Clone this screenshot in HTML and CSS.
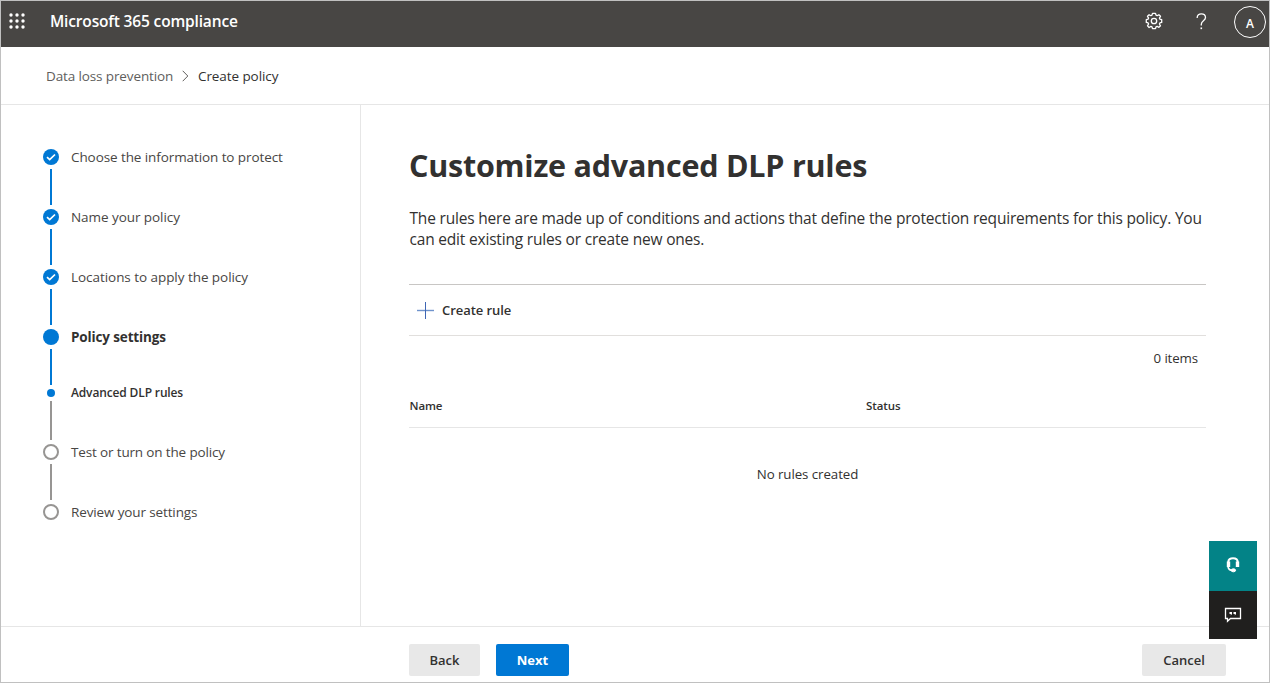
FILE: index.html
```html
<!DOCTYPE html>
<html lang="en">
<head>
<meta charset="utf-8">
<title>Create policy - Microsoft 365 compliance</title>
<link rel="stylesheet" href="styles.css">
</head>
<body>
<div class="app">
  <header class="topbar">
    <svg class="waffle" width="16" height="16" viewBox="0 0 16 16" fill="#fff">
      <circle cx="2" cy="2" r="1.700"/><circle cx="8" cy="2" r="1.700"/><circle cx="14" cy="2" r="1.700"/>
      <circle cx="2" cy="8" r="1.700"/><circle cx="8" cy="8" r="1.700"/><circle cx="14" cy="8" r="1.700"/>
      <circle cx="2" cy="14" r="1.700"/><circle cx="8" cy="14" r="1.700"/><circle cx="14" cy="14" r="1.700"/>
    </svg>
    <span class="brand">Microsoft 365 compliance</span>
    <svg class="gear" width="18" height="18" viewBox="0 0 18 18" fill="none" stroke="#fff" stroke-width="1.300" stroke-linejoin="round">
      <path d="M7.500 1.300h3l.5 1.900 1.100.5L13.900 2.700 15.500 4.300 14.400 6.100 14.900 7.200 16.700 7.600v2.800l-1.800.5-.5 1.100 1.100 1.800-1.600 1.600-1.800-1.100-1.100.5L10.500 16.700h-3L7 14.900l-1.100-.5-1.800 1.100-1.600-1.600L3.600 12l-.5-1.100L1.300 10.400V7.600l1.800-.4.500-1.100L2.500 4.300 4.100 2.700 5.900 3.700 7 3.200z"/>
      <circle cx="9" cy="9" r="2.700"/>
    </svg>
    <svg class="help" width="11" height="17" viewBox="0 0 11 17" fill="none" stroke="#fff" stroke-width="1.300">
      <path d="M1.200 5V4.500C1.200 2.300 3 .8 5.300.8s4.200 1.400 4.200 3.700c0 3.200-4.200 3.400-4.200 6.800V12.500"/>
      <path d="M4.500 15.300h1.600" stroke-width="1.700"/>
    </svg>
    <span class="avatar">A</span>
  </header>

  <nav class="crumbs">
    <span class="crumb-parent">Data loss prevention</span>
    <svg class="chevron" width="7" height="12" viewBox="0 0 7 12" fill="none" stroke="#605e5c"><path d="M.7.800 5.800 6 .7 11.200"/></svg>
    <span class="crumb-current">Create policy</span>
  </nav>

  <div class="body">
    <aside class="steps">
      <div class="step"><svg class="check" width="16" height="16" viewBox="0 0 16 16"><circle cx="8" cy="8" r="8" fill="#0078d4"/><path d="M4 8.200 6.700 10.700 12 5.500" fill="none" stroke="#fff" stroke-width="1.700"/></svg><span class="label s1">Choose the information to protect</span></div>
      <div class="line"></div>
      <div class="step"><svg class="check" width="16" height="16" viewBox="0 0 16 16"><circle cx="8" cy="8" r="8" fill="#0078d4"/><path d="M4 8.200 6.700 10.700 12 5.500" fill="none" stroke="#fff" stroke-width="1.700"/></svg><span class="label s2">Name your policy</span></div>
      <div class="line"></div>
      <div class="step"><svg class="check" width="16" height="16" viewBox="0 0 16 16"><circle cx="8" cy="8" r="8" fill="#0078d4"/><path d="M4 8.200 6.700 10.700 12 5.500" fill="none" stroke="#fff" stroke-width="1.700"/></svg><span class="label s3">Locations to apply the policy</span></div>
      <div class="line"></div>
      <div class="step"><i class="dot"></i><span class="label current">Policy settings</span></div>
      <div class="line"></div>
      <div class="step substep"><i class="dot small"></i><span class="label sub">Advanced DLP rules</span></div>
      <div class="line pending long"></div>
      <div class="step"><i class="dot ring"></i><span class="label s4">Test or turn on the policy</span></div>
      <div class="line pending"></div>
      <div class="step"><i class="dot ring"></i><span class="label s5">Review your settings</span></div>
    </aside>

    <main class="content">
      <h1>Customize advanced DLP rules</h1>
      <p class="intro">The rules here are made up of conditions and actions that define the protection requirements for this policy. You<br>can edit existing rules or create new ones.</p>
      <div class="commands">
        <svg class="plus" width="17" height="17" viewBox="0 0 17 17" fill="none"><path d="M0 8.500h17" stroke="#6f93cc" stroke-width="1.400"/><path d="M8.500 0v17" stroke="#3f66b4"/></svg>
        <span class="create">Create rule</span>
      </div>
      <div class="count"><span>0 items</span></div>
      <div class="columns"><span>Name</span><span>Status</span></div>
      <div class="empty"><span>No rules created</span></div>
    </main>
  </div>

  <footer class="footer">
    <button class="btn back">Back</button>
    <button class="btn next">Next</button>
    <button class="btn cancel">Cancel</button>
  </footer>

  <div class="floaters">
    <div class="support">
      <svg width="14" height="16" viewBox="0 0 14 16" fill="none" stroke="#fff">
        <path d="M2.300 6V5C2.300 2.500 4.300 1.200 7 1.200s4.700 1.300 4.700 3.800v1" stroke-width="2"/>
        <path d="M2.500 4.500v5.500M11.500 4.500v5.500" stroke-width="3.400"/>
        <path d="M2 9.500c.5 3 2.300 3.900 4.500 4" stroke-width="1.600"/>
        <ellipse cx="7.400" cy="13.300" rx="2.200" ry="1.500" fill="#fff"/>
      </svg>
    </div>
    <div class="feedback">
      <svg width="18" height="16" viewBox="0 0 18 16" fill="none" stroke="#fff" stroke-width="1.300">
        <path d="M1.500 1.500h15v10H6.500L3.500 14.300V11.500h-2z"/>
        <path d="M5.500 5h2.500v2L6.800 8.500V7H5.500zM9.500 5H12v2l-1.200 1.500V7H9.500z" fill="#fff" stroke="none"/>
      </svg>
    </div>
  </div>
</div>
</body>
</html>
```
FILE: styles.css
```css
* { box-sizing: border-box; }
body {
  margin: 0;
  font-family: "Open Sans", "Noto Sans", sans-serif;
  font-size: 13.500px;
  color: #323130;
  background: #fff;
}
.app {
  position: relative;
  width: 1270px;
  height: 683px;
  border: 1px solid #c0c0c0;
  display: flex;
  flex-direction: column;
  white-space: nowrap;
  overflow: hidden;
}
svg { display: block; flex: none; }

.topbar {
  height: 46px;
  flex: none;
  display: flex;
  align-items: center;
  padding: 0 3px 5px 8px;
  background: #484644;
  color: #fff;
}
.waffle { margin-top: -2px; }
.brand { margin: -1px 0 0 25px; font-size: 15.500px; font-weight: 600; letter-spacing: -0.160px; }
.gear { margin: -1px 0 0 auto; }
.help { margin: -1px 0 0 33px; }
.avatar {
  width: 32px;
  height: 32px;
  margin-left: 27px;
  border: 1px solid #fff;
  border-radius: 50%;
  display: flex;
  align-items: center;
  justify-content: center;
  padding-top: 3px;
  font-size: 12px;
  font-weight: 600;
}

.crumbs {
  height: 58px;
  flex: none;
  display: flex;
  align-items: center;
  padding-left: 45px;
  border-bottom: 1px solid #e6e6e6;
}
.crumb-parent { color: #605e5c; width: 127px; letter-spacing: -0.120px; }
.chevron { margin: 0 9px; }
.crumb-current { letter-spacing: -0.080px; }

.body { flex: 1; display: flex; min-height: 0; }
.steps {
  width: 360px;
  flex: none;
  padding: 44px 0 0 42px;
  border-right: 1px solid #e6e6e6;
}
.step { height: 16px; display: flex; align-items: center; }
.substep { height: 8px; }
.label { margin: -1px 0 0 12px; color: #484644; }
.s1 { letter-spacing: -0.090px; }
.s2 { letter-spacing: -0.060px; }
.s3 { letter-spacing: -0.050px; }
.s4 { letter-spacing: -0.150px; }
.s5 { letter-spacing: -0.130px; }
.dot { width: 16px; height: 16px; border-radius: 50%; background: #0078d4; flex: none; }
.dot.small { width: 8px; height: 8px; margin: 0 4px; }
.dot.ring { background: #fff; border: 2px solid #979593; }
.line { width: 2px; height: 36px; margin: 4px 0 4px 7px; background: #0078d4; }
.line.pending { background: #979593; }
.line.long { height: 39px; }
.label.current { margin-top: 0; font-weight: 700; color: #323130; letter-spacing: -0.140px; }
.label.sub { font-weight: 600; color: #323130; font-size: 12px; letter-spacing: -0.140px; }

.content { width: 845px; padding: 37px 0 0 48px; }
h1 { margin: 0; font-size: 30.500px; line-height: 46px; font-weight: 700; letter-spacing: -0.230px; }
.intro { margin: 20px 0 0; padding-left: 0.500px; font-size: 15.500px; line-height: 21px; letter-spacing: -0.190px; }
.commands {
  height: 52px;
  margin-top: 34px;
  padding-left: 8px;
  border-top: 1px solid #c8c6c4;
  border-bottom: 1px solid #e1dfdd;
  display: flex;
  align-items: center;
}
.create { margin: -1px 0 0 8px; font-size: 13px; font-weight: 600; letter-spacing: -0.060px; }
.count { height: 44px; padding: 0 8px 1px 0; display: flex; align-items: center; justify-content: flex-end; font-size: 13.300px; letter-spacing: -0.120px; }
.columns {
  height: 48px;
  border-bottom: 1px solid #e6e6e6;
  display: grid;
  grid-template-columns: 456.500px 1fr;
  align-items: center;
  padding: 4px 0 0 0.500px;
  font-size: 11.500px;
  font-weight: 600;
  letter-spacing: -0.100px;
}
.empty { height: 92px; padding-bottom: 1px; display: flex; align-items: center; justify-content: center; font-size: 13.300px; letter-spacing: -0.070px; }

.footer {
  height: 56px;
  flex: none;
  border-top: 1px solid #e6e6e6;
  display: flex;
  align-items: flex-start;
  padding: 17px 43px 0 408px;
}
.btn {
  height: 32px;
  padding: 0 0 1px;
  border: 0;
  border-radius: 2px;
  background: #e8e8e8;
  color: #323130;
  font-family: inherit;
  font-size: 13px;
  font-weight: 600;
}
.back { width: 71px; }
.next { width: 73px; margin-left: 16px; background: #0078d4; color: #fff; font-weight: 700; }
.cancel { width: 84px; margin-left: auto; }

.floaters { position: absolute; left: 1208px; top: 540px; width: 48px; }
.floaters > div { display: flex; align-items: center; justify-content: center; }
.support { height: 50px; padding-bottom: 2px; background: #038387; }
.feedback { height: 48px; background: #201f1e; }
```
